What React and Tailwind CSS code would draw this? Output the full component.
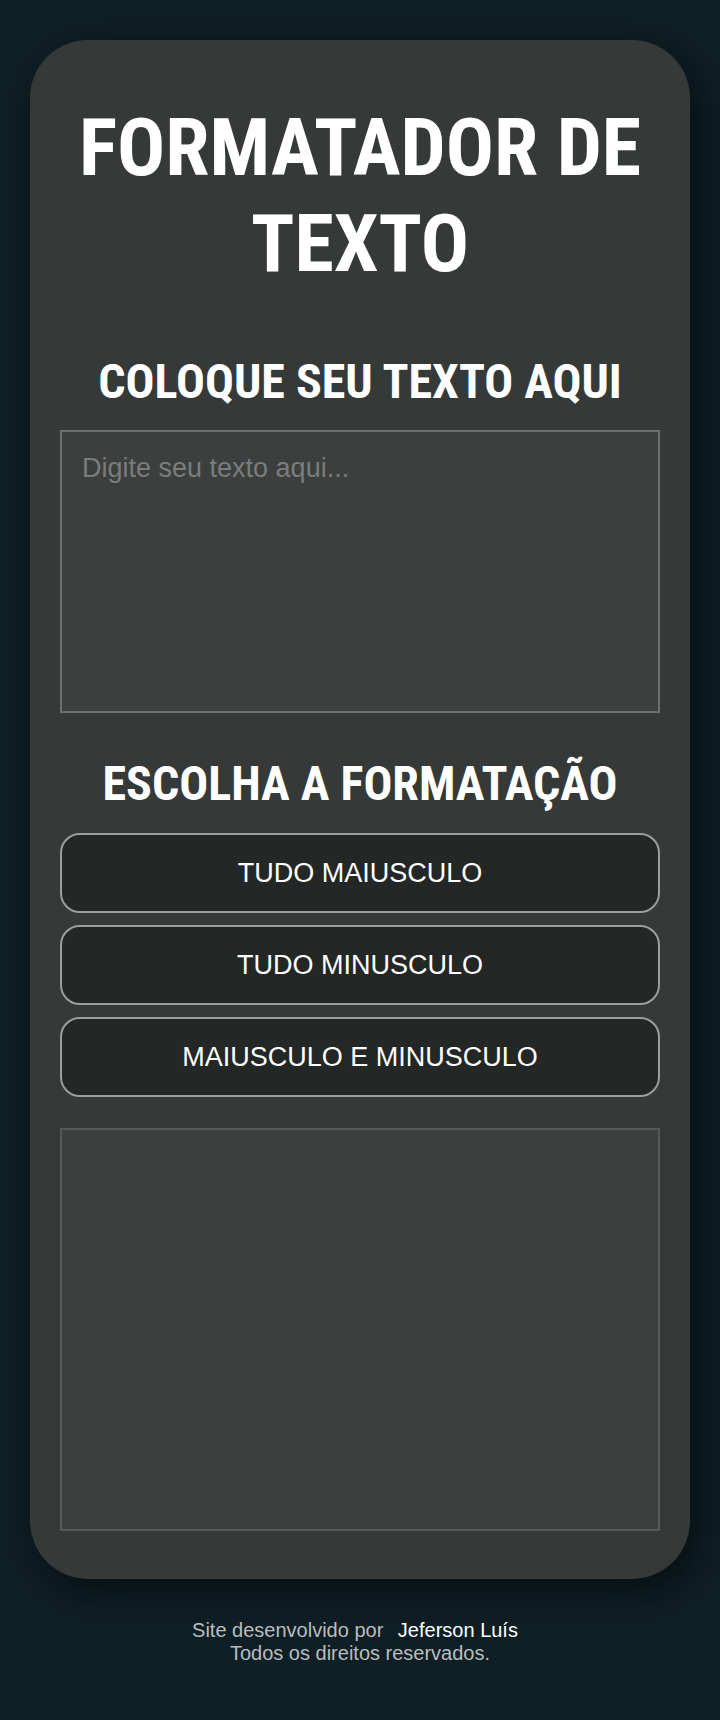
import React from "react";

export default function App() {
  const buttons = ["TUDO MAIUSCULO", "TUDO MINUSCULO", "MAIUSCULO E MINUSCULO"];
  return (
    <div className="min-h-screen w-full bg-[#0f1f26] flex flex-col items-center pt-[40px] pb-[50px] font-['Liberation_Sans',Arial,sans-serif]">
      <main className="w-[660px] bg-[#353a38] rounded-[58px] px-[30px] pt-[60px] pb-[48px] shadow-[8px_12px_40px_rgba(0,0,0,0.55)] flex flex-col">
        <h1 className="text-center text-white font-bold text-[80px] leading-[96px] font-['Roboto_Condensed',Roboto,sans-serif] font-stretch-condensed">
          FORMATADOR DE<br />TEXTO
        </h1>
        <h2 className="mt-[62px] text-center text-white font-bold text-[48px] leading-[56px] font-['Roboto_Condensed',Roboto,sans-serif] font-stretch-condensed">
          COLOQUE SEU TEXTO AQUI
        </h2>
        <textarea
          placeholder="Digite seu texto aqui..."
          className="mt-[20px] h-[283px] w-full resize-none bg-[#3b3f3e] border-2 border-[#6e706f] px-[20px] pt-[16px] pb-[20px] text-[27px] text-white placeholder:text-[#7a7d7d] outline-none font-['Liberation_Sans',Arial,sans-serif]"
        />
        <h2 className="mt-[43px] text-center text-white font-bold text-[48px] leading-[56px] font-['Roboto_Condensed',Roboto,sans-serif] font-stretch-condensed">
          ESCOLHA A FORMATAÇÃO
        </h2>
        <div className="mt-[21px] flex flex-col gap-[12px]">
          {buttons.map((b) => (
            <button
              key={b}
              className="h-[80px] w-full rounded-[20px] border-2 border-[#9b9d9c] bg-[#232726] text-white text-[27px] font-['Liberation_Sans',Arial,sans-serif]"
            >
              {b}
            </button>
          ))}
        </div>
        <textarea
          readOnly
          className="mt-[31px] h-[403px] w-full resize-none bg-[#3b3f3e] border-2 border-[#575a59] p-[20px] text-[27px] text-white outline-none font-['Liberation_Sans',Arial,sans-serif]"
        />
      </main>
      <footer className="mt-[40px] text-center text-[20px] leading-[23px] text-[#b9bdbe] font-['Liberation_Sans',Arial,sans-serif]">
        <p>
          Site desenvolvido por <a className="text-white ml-[9px] mr-[10px]">Jeferson Luís</a>
        </p>
        <p>Todos os direitos reservados.</p>
      </footer>
    </div>
  );
}
